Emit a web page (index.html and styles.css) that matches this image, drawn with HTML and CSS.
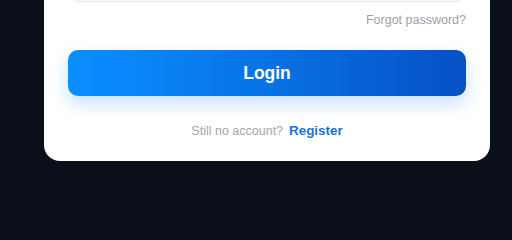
FILE: index.html
```html
<!DOCTYPE html>
<html lang="en">
<head>
<meta charset="utf-8">
<title>Login</title>
<link rel="stylesheet" href="styles.css">
</head>
<body>
<main class="page">
  <form class="card">
    <input class="field" type="password" aria-label="Password">
    <div class="forgot-row"><a class="forgot" href="#">Forgot password?</a></div>
    <button class="login" type="button">Login</button>
    <p class="footer"><span class="muted">Still no account?</span><a class="register" href="#">Register</a></p>
  </form>
</main>
</body>
</html>
```
FILE: styles.css
```css
html, body {
  margin: 0;
  padding: 0;
  background: #0b0f1a;
  font-family: "Liberation Sans", Arial, sans-serif;
}
.page {
  display: flex;
  align-items: flex-start;
  width: 512px;
  padding-left: 44px;
  box-sizing: border-box;
}
.card {
  width: 446px;
  box-sizing: border-box;
  margin: -66px 0 0;
  padding: 24px 24px 22px;
  background: #ffffff;
  border-radius: 16px;
  display: flex;
  flex-direction: column;
}
.field {
  height: 44px;
  box-sizing: border-box;
  border: 1px solid #e8eaee;
  border-radius: 10px;
  background: #f7f8fa;
  margin: 0;
}
.forgot-row {
  margin-top: 11px;
  display: flex;
  justify-content: flex-end;
  line-height: 14px;
}
.forgot {
  font-size: 12.5px;
  color: #9ca1ad;
  text-decoration: none;
}
.login {
  margin-top: 23px;
  height: 46px;
  border: 0;
  border-radius: 10px;
  background: linear-gradient(90deg, #0a8fff 0%, #0772e6 50%, #0650c4 100%);
  color: #ffffff;
  font-family: "Liberation Sans", Arial, sans-serif;
  font-weight: 700;
  font-size: 17.5px;
  box-shadow: 0 8px 18px rgba(20, 110, 240, 0.22);
  padding: 0;
}
.footer {
  margin: 27px 0 0;
  line-height: 16px;
  display: flex;
  justify-content: center;
  align-items: baseline;
  gap: 6px;
}
.muted {
  font-size: 12.5px;
  color: #a3a7b0;
}
.register {
  font-size: 13.4px;
  font-weight: 700;
  color: #1a72d6;
  text-decoration: none;
}
```
